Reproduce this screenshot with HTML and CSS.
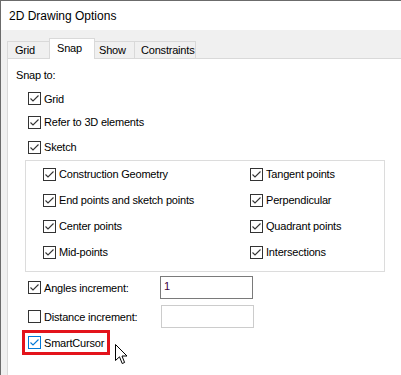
FILE: index.html
```html
<!DOCTYPE html>
<html lang="en">
<head>
  <meta charset="UTF-8">
  <title>2D Drawing Options</title>
  <link rel="stylesheet" href="styles.css">
</head>
<body>
  <div class="window">
    <div class="titlebar">2D Drawing Options</div>
    <div class="tabs">
      <div class="tab tab-grid">Grid</div>
      <div class="tab tab-snap active">Snap</div>
      <div class="tab tab-show">Show</div>
      <div class="tab tab-constraints">Constraints</div>
    </div>
    <div class="panel">
      <div class="caption">Snap to:</div>
      <div class="options">
        <label class="check opt-grid"><svg class="box" viewBox="0 0 13 13"><rect x="0.5" y="0.5" width="12" height="12"/><polyline points="2.5,6.5 5,9 10.5,3.5"/></svg>Grid</label>
        <label class="check opt-refer"><svg class="box" viewBox="0 0 13 13"><rect x="0.5" y="0.5" width="12" height="12"/><polyline points="2.5,6.5 5,9 10.5,3.5"/></svg>Refer to 3D elements</label>
        <label class="check opt-sketch"><svg class="box" viewBox="0 0 13 13"><rect x="0.5" y="0.5" width="12" height="12"/><polyline points="2.5,6.5 5,9 10.5,3.5"/></svg>Sketch</label>
      </div>
      <div class="group">
        <label class="check"><svg class="box" viewBox="0 0 13 13"><rect x="0.5" y="0.5" width="12" height="12"/><polyline points="2.5,6.5 5,9 10.5,3.5"/></svg>Construction Geometry</label>
        <label class="check"><svg class="box" viewBox="0 0 13 13"><rect x="0.5" y="0.5" width="12" height="12"/><polyline points="2.5,6.5 5,9 10.5,3.5"/></svg>Tangent points</label>
        <label class="check"><svg class="box" viewBox="0 0 13 13"><rect x="0.5" y="0.5" width="12" height="12"/><polyline points="2.5,6.5 5,9 10.5,3.5"/></svg>End points and sketch points</label>
        <label class="check"><svg class="box" viewBox="0 0 13 13"><rect x="0.5" y="0.5" width="12" height="12"/><polyline points="2.5,6.5 5,9 10.5,3.5"/></svg>Perpendicular</label>
        <label class="check"><svg class="box" viewBox="0 0 13 13"><rect x="0.5" y="0.5" width="12" height="12"/><polyline points="2.5,6.5 5,9 10.5,3.5"/></svg>Center points</label>
        <label class="check"><svg class="box" viewBox="0 0 13 13"><rect x="0.5" y="0.5" width="12" height="12"/><polyline points="2.5,6.5 5,9 10.5,3.5"/></svg>Quadrant points</label>
        <label class="check"><svg class="box" viewBox="0 0 13 13"><rect x="0.5" y="0.5" width="12" height="12"/><polyline points="2.5,6.5 5,9 10.5,3.5"/></svg>Mid-points</label>
        <label class="check"><svg class="box" viewBox="0 0 13 13"><rect x="0.5" y="0.5" width="12" height="12"/><polyline points="2.5,6.5 5,9 10.5,3.5"/></svg>Intersections</label>
      </div>
      <div class="inc-row inc-angles">
        <label class="check inc-label"><svg class="box" viewBox="0 0 13 13"><rect x="0.5" y="0.5" width="12" height="12"/><polyline points="2.5,6.5 5,9 10.5,3.5"/></svg>Angles increment:</label>
        <div class="field">1</div>
      </div>
      <div class="inc-row inc-distance">
        <label class="check inc-label"><svg class="box" viewBox="0 0 13 13"><rect x="0.5" y="0.5" width="12" height="12"/></svg>Distance increment:</label>
        <div class="field disabled"></div>
      </div>
      <div class="smart">
        <label class="check focused"><svg class="box" viewBox="0 0 13 13"><rect x="0.5" y="0.5" width="12" height="12"/><polyline points="2.5,6.5 5,9 10.5,3.5"/></svg>SmartCursor</label>
      </div>
    </div>
    <!-- mouse pointer over the dialog -->
    <svg class="pointer" viewBox="0 0 13 21"><path d="M0.5 0.5 L0.5 16.5 L4.5 12.8 L7.2 19.5 L9.6 18.5 L7 12 L12 12 Z"/></svg>
  </div>
</body>
</html>
```

FILE: styles.css
```css
html, body {
  margin: 0;
  padding: 0;
  height: 375px;
  overflow: hidden;
}
body {
  font-family: 'Liberation Sans', Arial, sans-serif;
  font-size: 11px;
  letter-spacing: -0.2px;
  color: #000;
  background: #f0f0f0;
}
.window {
  position: relative;
  height: 374px;
  border-top: 1px solid #6b6b6b;
  border-left: 1px solid #6b6b6b;
  background: #f0f0f0;
}
.titlebar {
  height: 29px;
  line-height: 30px;
  padding-left: 8px;
  background: #fff;
  font-size: 12px;
  letter-spacing: 0;
}

/* --- tabs --- */
.tabs {
  display: flex;
  align-items: flex-end;
  height: 28px;
  padding-left: 6px;
}
.tab {
  box-sizing: border-box;
  height: 17px;
  line-height: 17px;
  border: 1px solid #d9d9d9;
  border-bottom: none;
  margin-right: -1px;
  background: #f0f0f0;
}
.tab.active {
  position: relative;
  z-index: 1;
  height: 21px;
  line-height: 18px;
  margin-bottom: -1px;
  background: #fff;
}
.tab-grid { width: 43px; padding-left: 7px; }
.tab-snap { width: 46px; padding-left: 7px; }
.tab-show { width: 41px; padding-left: 4px; }
.tab-constraints { width: 62px; padding-left: 6px; }

.panel {
  height: 316px;
  margin-left: 6px;
  padding: 5px 0 0 8px;
  border-top: 1px solid #d9d9d9;
  border-left: 1px solid #d9d9d9;
  background: #fff;
}
.caption {
  height: 23px;
  line-height: 23px;
}

/* --- checkboxes --- */
.check {
  display: flex;
  align-items: center;
  gap: 3px;
  white-space: nowrap;
}
.box {
  width: 13px;
  height: 13px;
  flex: none;
}
.box rect {
  fill: #fff;
  stroke: #333;
}
.box polyline {
  fill: none;
  stroke: #333;
  stroke-width: 1.1;
}
.options {
  margin-left: 12px;
}
.opt-grid { height: 23px; }
.opt-refer { height: 24px; }
.opt-sketch { height: 26px; }

.group {
  box-sizing: border-box;
  width: 360px;
  margin-left: 9px;
  padding: 0 0 6px 17px;
  border: 1px solid #dcdcdc;
  display: grid;
  grid-template-columns: 207px 1fr;
  grid-auto-rows: 26px;
}

/* --- increments --- */
.inc-row {
  display: flex;
  align-items: center;
  height: 23px;
  margin-left: 12px;
}
.inc-angles { margin-top: 4px; }
.inc-distance { margin-top: 6px; }
.inc-label {
  width: 132px;
}
.field {
  box-sizing: border-box;
  width: 93px;
  height: 23px;
  padding-left: 3px;
  line-height: 19px;
  border: 1px solid #7a7a7a;
  background: #fff;
  color: #400040;
}
.field.disabled {
  margin-left: 1px;
  border-color: #cccccc;
}

.smart {
  display: flex;
  margin: 2px 0 0 6px;
}
.check.focused {
  height: 19px;
  padding: 0 3px;
  border: 3px solid #e3131b;
}
.focused .box rect,
.focused .box polyline {
  stroke: #0078d7;
}

.pointer {
  position: absolute;
  left: 114px;
  top: 343px;
  width: 13px;
  height: 21px;
}
.pointer path {
  fill: #fff;
  stroke: #000;
  stroke-width: 1;
  stroke-linejoin: miter;
}
```
